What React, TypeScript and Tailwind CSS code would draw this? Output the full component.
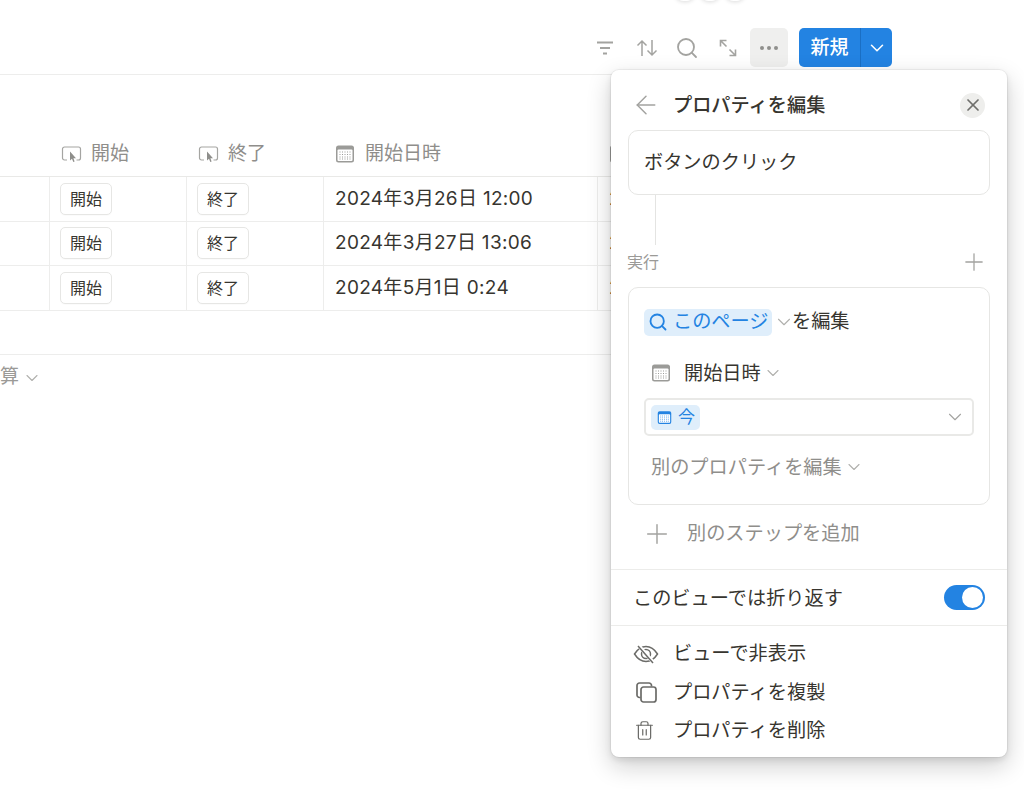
import { ChevronDown, Plus, Search, X, ArrowLeft, Trash2 } from "lucide-react";

const font = { fontFamily: '"Inter", "Noto Sans CJK JP", sans-serif' };

const rows = [
  { date: "2024年3月26日 12:00" },
  { date: "2024年3月27日 13:06" },
  { date: "2024年5月1日 0:24" },
];

function ButtonIcon() {
  return (
    <svg width="21" height="18" viewBox="0 0 21 18" fill="none">
      <path d="M6 15H3.500A2 2 0 0 1 1.500 13V4A2 2 0 0 1 3.500 2H17.500A2 2 0 0 1 19.500 4V13A2 2 0 0 1 17.500 15H15.500" stroke="#a5a5a2" strokeWidth="1.200" />
      <path d="M9 6.500V15.500L11 13.700L12.300 17L13.600 16.400L12.400 13.200H15Z" fill="#8e8e8b" />
    </svg>
  );
}

function CalendarIcon({ color = "#9b9b98", size = 20 }: { color?: string; size?: number }) {
  return (
    <svg width={size} height={size} viewBox="0 0 20 20" fill="none">
      <rect x="1" y="1.500" width="18" height="17" rx="2.500" fill={color} />
      <rect x="2.500" y="5.500" width="15" height="11.500" rx="1" fill="#fff" />
      {[8, 10.500, 13, 15].map((y) =>
        [5, 7.500, 10, 12.500, 15].map((x) => <rect key={`${x}-${y}`} x={x - 0.500} y={y - 0.500} width="1" height="1" fill={color} />),
      )}
    </svg>
  );
}

function EyeOffIcon() {
  return (
    <svg width="26" height="20" viewBox="0 0 26 20" fill="none" stroke="#6b6b68" strokeWidth="1.500">
      <path d="M1.500 10C5 4.500 9 2.500 13 2.500S21 4.500 24.500 10C21 15.500 17 17.500 13 17.500S5 15.500 1.500 10Z" />
      <circle cx="13" cy="10" r="4.500" />
      <path d="M5.500 1.500L20.500 18.500" stroke="#fff" strokeWidth="3.500" />
      <path d="M5 2L20 19" />
    </svg>
  );
}

function CopyIcon() {
  return (
    <svg width="21" height="21" viewBox="0 0 21 21" fill="none" stroke="#6b6b68" strokeWidth="1.700">
      <path d="M4.500 15.500H3.500A2.500 2.500 0 0 1 1 13V3.500A2.500 2.500 0 0 1 3.500 1H13A2.500 2.500 0 0 1 15.500 3.500V4.500" />
      <rect x="5" y="5" width="15" height="15" rx="2.500" />
    </svg>
  );
}

function RowButton({ label }: { label: string }) {
  return (
    <span className="flex h-[32px] w-[52px] items-center justify-center rounded-[5px] border border-[#e6e6e4] bg-white text-[16px] text-[#37352f] shadow-[0_1px_1px_rgba(0,0,0,0.02)]">
      {label}
    </span>
  );
}

function Panel() {
  return (
    <div className="absolute left-[611px] top-[70px] flex h-[687px] w-[396px] flex-col rounded-[8px] bg-white leading-[28px] shadow-[0_0_0_1px_rgba(15,15,15,0.05),0_3px_6px_rgba(15,15,15,0.1),0_9px_24px_rgba(15,15,15,0.2)]">
      <div className="flex h-[60px] shrink-0 items-center pl-[20px] pr-[22px] pt-[10px]">
        <ArrowLeft size={30} strokeWidth={1.200} className="shrink-0 text-[#a3a3a0]" />
        <span className="ml-[12px] flex-1 text-[19.200px] font-medium text-[#37352f]">プロパティを編集</span>
        <span className="flex h-[25px] w-[25px] items-center justify-center rounded-full bg-[#eeeeec]">
          <X size={20} strokeWidth={2.100} className="shrink-0 text-[#6f6f6c]" />
        </span>
      </div>

      <div className="mx-[17px] flex h-[65px] shrink-0 items-center rounded-[10px] border border-[#e6e6e4] px-[15px] pb-[2px] text-[19.200px] text-[#37352f]">
        ボタンのクリック
      </div>
      <div className="ml-[44px] h-[50px] w-px shrink-0 bg-[#e4e4e2]" />

      <div className="mx-[16px] flex h-[34px] shrink-0 items-center justify-between pr-[3px] text-[16px] text-[#9b9a97]">
        <span>実行</span>
        <Plus size={28} strokeWidth={1.100} className="shrink-0 text-[#a3a3a0]" />
      </div>

      <div className="mx-[17px] mt-[8px] h-[218px] shrink-0 rounded-[10px] border border-[#e6e6e4] px-[15px] pt-[19px]">
        <div className="flex items-center text-[19.200px] text-[#37352f]">
          <span className="flex h-[27px] w-[128px] shrink-0 items-center rounded-[5px] bg-[#dfeefb] pl-[4px] text-[#2383e2]">
            <Search size={20} strokeWidth={2.200} className="shrink-0" />
            <span className="ml-[5px] pb-[2px]">このページ</span>
          </span>
          <ChevronDown size={22} strokeWidth={1.200} className="-mr-[3px] ml-[1px] shrink-0 text-[#b0b0ad]" />
          <span className="pb-[2px]">を編集</span>
        </div>

        <div className="mt-[22px] flex items-center pl-[7px] text-[19.200px] text-[#37352f]">
          <CalendarIcon />
          <span className="ml-[13px]">開始日時</span>
          <ChevronDown size={20} strokeWidth={1.300} className="ml-[2px] shrink-0 text-[#b0b0ad]" />
        </div>

        <div className="mt-[11px] flex h-[38px] items-center justify-between rounded-[5px] border-2 border-[#e9e9e7] pl-[5px] pr-[6px]">
          <span className="flex h-[25px] w-[49px] items-center rounded-[5px] bg-[#dfeefb] pl-[6px] text-[17px] text-[#2383e2]">
            <CalendarIcon color="#2383e2" size={15} />
            <span className="ml-[6px]">今</span>
          </span>
          <ChevronDown size={22} strokeWidth={1.200} className="shrink-0 text-[#a3a3a0]" />
        </div>

        <div className="mt-[17px] flex items-center pl-[7px] text-[19.200px] text-[#8f8e8b]">
          別のプロパティを編集
          <ChevronDown size={20} strokeWidth={1.300} className="ml-[2px] shrink-0 text-[#b0b0ad]" />
        </div>
      </div>

      <div className="mx-[34px] mt-[14px] flex h-[30px] shrink-0 items-center text-[19.200px] text-[#8f8e8b]">
        <Plus size={32} strokeWidth={1.100} className="-ml-[4px] shrink-0 text-[#a3a3a0]" />
        <span className="ml-[14px] pb-[2px]">別のステップを追加</span>
      </div>

      <div className="mt-[20px] h-px shrink-0 bg-[#ececea]" />
      <div className="flex h-[55px] shrink-0 items-center justify-between pl-[22px] pr-[22px] text-[19.200px] text-[#37352f]">
        <span>このビューでは折り返す</span>
        <span className="flex h-[25px] w-[41px] items-center justify-end rounded-full bg-[#2383e2] pr-[2px]">
          <span className="h-[21px] w-[21px] rounded-full bg-white" />
        </span>
      </div>
      <div className="h-px shrink-0 bg-[#ececea]" />

      <div className="flex flex-col pt-[8px] text-[19.200px] text-[#37352f]">
        <div className="flex h-[39px] items-center pl-[22px]">
          <EyeOffIcon />
          <span className="ml-[14px] pb-[2px]">ビューで非表示</span>
        </div>
        <div className="flex h-[38px] items-center pl-[25px]">
          <CopyIcon />
          <span className="ml-[16px]">プロパティを複製</span>
        </div>
        <div className="flex h-[38px] items-center pl-[23px]">
          <Trash2 size={21} strokeWidth={1.400} className="shrink-0 text-[#6b6b68]" />
          <span className="ml-[18px]">プロパティを削除</span>
        </div>
      </div>
    </div>
  );
}

export default function App() {
  return (
    <div className="relative h-[805px] w-[1024px] overflow-hidden bg-white" style={font}>
      <div className="absolute left-[675px] top-[-16px] flex gap-[5px]">
        <span className="h-[17px] w-[20px] rounded-full bg-white shadow-[0_1px_4px_rgba(0,0,0,0.14)]" />
        <span className="h-[17px] w-[20px] rounded-full bg-white shadow-[0_1px_4px_rgba(0,0,0,0.14)]" />
        <span className="h-[17px] w-[20px] rounded-full bg-white shadow-[0_1px_4px_rgba(0,0,0,0.14)]" />
      </div>

      <div className="w-[892px]">
        <div className="flex h-[75px] border-b border-[#ededec] pl-[595px] pt-[28px]">
          <div className="flex h-[39px] items-center text-[#a3a3a0]">
            <svg width="20" height="20" viewBox="0 0 20 20" fill="none" stroke="#a3a3a0" strokeWidth="1.800" className="mr-[21px] shrink-0">
              <path d="M2 4.500H18M5 10H15M8 15.500H12" />
            </svg>
            <svg width="22" height="20" viewBox="0 0 22 20" fill="none" stroke="#a3a3a0" strokeWidth="1.500" className="mr-[17px] shrink-0">
              <path d="M6 18V3M1.500 7.500L6 3L10.500 7.500M16 2V17M11.500 12.500L16 17L20.500 12.500" />
            </svg>
            <Search size={24} strokeWidth={1.800} className="mr-[19px] shrink-0" />
            <svg width="20" height="20" viewBox="0 0 20 20" fill="none" stroke="#a3a3a0" strokeWidth="1.600" className="mr-[12px] shrink-0">
              <path d="M2.500 2.500L8.500 8.500M11.500 11.500L17.500 17.500M2.500 8.500V2.500H8.500M17.500 11.500V17.500H11.500" />
            </svg>
            <span className="flex h-[39px] w-[38px] items-center justify-center rounded-[5px] bg-[#efefee]">
              <span className="flex gap-[3px]">
                <span className="h-[4px] w-[4px] rounded-full bg-[#8f8f8c]" />
                <span className="h-[4px] w-[4px] rounded-full bg-[#8f8f8c]" />
                <span className="h-[4px] w-[4px] rounded-full bg-[#8f8f8c]" />
              </span>
            </span>
            <span className="ml-[11px] flex h-[39px] w-[93px] items-center rounded-[5px] bg-[#2383e2] text-[19px] font-medium text-white">
              <span className="flex h-full w-[62px] items-center justify-center border-r border-[#1a6fc4] pt-[1px]">新規</span>
              <span className="flex flex-1 items-center justify-center">
                <ChevronDown size={22} strokeWidth={1.700} className="shrink-0" />
              </span>
            </span>
          </div>
        </div>

        <div className="mt-[54px] flex h-[48px] items-center border-b border-[#e9e9e7] pt-[3px] text-[19px] text-[#8f8e8b]">
          <div className="flex w-[187px] items-center pl-[61px]">
            <ButtonIcon />
            <span className="ml-[9px]">開始</span>
          </div>
          <div className="flex w-[137px] items-center pl-[11px]">
            <ButtonIcon />
            <span className="ml-[9px]">終了</span>
          </div>
          <div className="flex w-[274px] items-center pl-[11px]">
            <CalendarIcon />
            <span className="ml-[10px]">開始日時</span>
          </div>
          <div className="flex flex-1 items-center pl-[11px]">
            <CalendarIcon />
          </div>
        </div>

        {rows.map((r) => (
          <div key={r.date} className="flex h-[44.500px] border-b border-[#ededec] text-[#37352f]">
            <div className="w-[50px] border-r border-[#ededec]" />
            <div className="flex w-[137px] items-center border-r border-[#ededec] pl-[10px]">
              <RowButton label="開始" />
            </div>
            <div className="flex w-[137px] items-center border-r border-[#ededec] pl-[10px]">
              <RowButton label="終了" />
            </div>
            <div className="flex w-[274px] items-center border-r border-[#ededec] pl-[11px] text-[19px] tracking-[0.3px]">{r.date}</div>
            <div className="flex flex-1 items-center overflow-hidden whitespace-nowrap pl-[11px] text-[19px] tracking-[0.3px]">{r.date}</div>
          </div>
        ))}

        <div className="mt-[43px] flex h-[44px] items-center border-t border-[#ededec] pt-[3px] text-[19px] text-[#9b9a97]">
          算
          <ChevronDown size={20} strokeWidth={1.300} className="ml-[3px] shrink-0 text-[#b0b0ad]" />
        </div>
      </div>

      <Panel />
    </div>
  );
}
